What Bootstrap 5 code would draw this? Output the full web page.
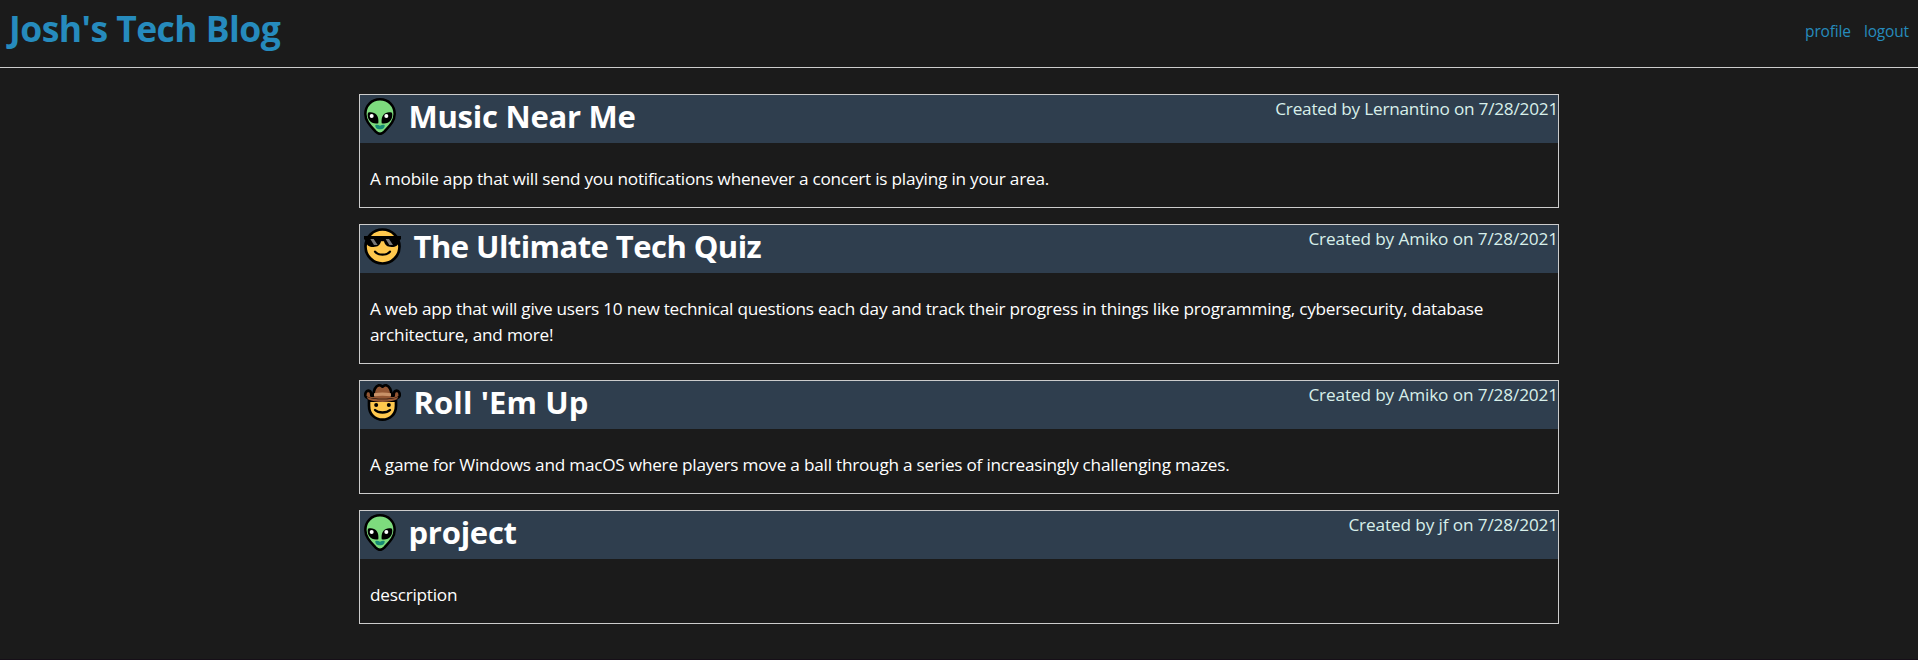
<!DOCTYPE html>
<html lang="en">
<head>
<meta charset="utf-8">
<meta name="viewport" content="width=device-width, initial-scale=1">
<title>Josh's Tech Blog</title>
<link rel="stylesheet" href="https://cdn.jsdelivr.net/npm/bootstrap@5.3.0/dist/css/bootstrap.min.css">
<style>
  body { background: #1b1b1b; color: #fff; font-family: "Segoe UI", "Open Sans", sans-serif; border-bottom: 1px solid #160f18; }
  a { color: #268bbd; }
  .site-header { height: 68px; border-bottom: 1px solid #ccc; }
  .site-title { font-size: 35.5px; font-weight: 700; line-height: 56px; letter-spacing: -.55px; padding-left: 1px; }
  .site-nav { font-size: 15.5px; line-height: 24px; letter-spacing: -.15px; gap: 13px; padding: 19px 1px 0 0; }
  .site-main { width: 1200px; padding-top: 26px; }
  .project { border: 1px solid #ccc; }
  .project-head { height: 48px; background: #2f3e4e; }
  .project-name { font-size: 31px; font-weight: 700; line-height: 42px; letter-spacing: var(--track, -.25px); }
  .project-icon { width: 37px; height: 37px; margin: 3px 12.5px 0 4px; flex: none; }
  .project-icon.alien { width: 32px; height: 37px; }
  .project-meta { font-size: 17.2px; line-height: 28px; color: #d8efea; letter-spacing: -.12px; }
  .project-text { font-size: 17.2px; line-height: 26px; letter-spacing: -.23px; padding: 23px 8px 15px 10px; }
  .track-tight { --track: -.55px; }
  .track-wide { --track: .1px; }
  .meta-tight { letter-spacing: -.22px; }
</style>
</head>
<body class="min-vh-100">
<svg class="d-none" xmlns="http://www.w3.org/2000/svg">
  <symbol id="alien" viewBox="0 0 96 111">
    <path d="M48 4C22 4 4 23 4 48c0 22 17 37 31 53 8 8 18 8 26 0 14-16 31-31 31-53C92 23 74 4 48 4Z" fill="#7ddb7d" stroke="#000" stroke-width="7.5"/>
    <path d="M12 44c9-3 20-1 26 7 5 7 6 15 5 25-12 2-21-1-27-9-5-7-6-16-4-23ZM84 44c-9-3-20-1-26 7-5 7-6 15-5 25 12 2 21-1 27-9 5-7 6-16 4-23Z" fill="#000"/>
    <circle cx="23" cy="54" r="6" fill="#fff"/><circle cx="67" cy="54" r="6" fill="#fff"/>
    <path d="M34 81q6-2 14 2 8-4 14-2c1 8-5 13-14 13s-15-5-14-13Z" fill="#178b74"/>
  </symbol>
  <symbol id="cool" viewBox="0 0 111 111">
    <circle cx="55.5" cy="55.5" r="51" fill="#ffc84d" stroke="#000" stroke-width="8"/>
    <path d="M0 24h111v10q-5 1-6 7c-2 10-9 16-22 16-14 0-20-5-23-17h-9c-3 12-9 17-23 17-13 0-20-6-22-16q-1-6-6-7Z" fill="#000"/>
    <path d="M19 33h10l12 18H30ZM65 33h10l12 18H76Z" fill="#777"/>
    <path d="M33 71c9 12 36 12 45 0" fill="none" stroke="#000" stroke-width="7" stroke-linecap="round"/>
  </symbol>
  <symbol id="cowboy" viewBox="0 0 111 111">
    <path d="M15 50v15c0 26 18 42 40.500 42S96 91 96 65V50Z" fill="#ffc84d" stroke="#000" stroke-width="8"/>
    <path d="M28 35c1-17 7-28 16-31 5-1 8 2 11.500 4C59 6 62 3 67 4c9 3 15 14 16 31h6c0-8 2-15 9-15 7 1 10 8 9 15-2 9-20 13-51.500 13S6 44 4 35c-1-7 2-14 9-15 7 0 9 7 9 15Z" fill="#935633" stroke="#000" stroke-width="8" stroke-linejoin="round"/>
    <path d="M8 38q18 8 47.500 8T103 38l-4 8q-18 8-43.500 8T12 46Z" fill="#935633"/>
    <path d="M30 28q25-5 51 0v9q-26-4-51 0Z" fill="#c99268"/>
    <path d="M55.500 5v7" stroke="#000" stroke-width="5"/>
    <circle cx="36.500" cy="63" r="6" fill="#000"/><circle cx="74.500" cy="63" r="6" fill="#000"/>
    <path d="M33 78c10 10 35 10 45 0" fill="none" stroke="#000" stroke-width="7" stroke-linecap="round"/>
  </symbol>
</svg>

<header class="site-header d-flex justify-content-between align-items-start px-2">
  <h1 class="site-title m-0"><a href="#" class="text-decoration-none">Josh's Tech Blog</a></h1>
  <nav class="site-nav d-flex">
    <a href="#" class="text-decoration-none">profile</a>
    <a href="#" class="text-decoration-none">logout</a>
  </nav>
</header>

<main class="site-main mx-auto d-flex flex-column gap-3">
  <article class="project">
    <div class="project-head d-flex justify-content-between">
      <div class="d-flex align-items-start"><svg class="project-icon alien"><use href="#alien"/></svg><h2 class="project-name m-0">Music Near Me</h2></div>
      <div class="project-meta meta-tight">Created by Lernantino on 7/28/2021</div>
    </div>
    <p class="project-text m-0">A mobile app that will send you notifications whenever a concert is playing in your area.</p>
  </article>
  <article class="project">
    <div class="project-head d-flex justify-content-between">
      <div class="d-flex align-items-start"><svg class="project-icon"><use href="#cool"/></svg><h2 class="project-name track-tight m-0">The Ultimate Tech Quiz</h2></div>
      <div class="project-meta">Created by Amiko on 7/28/2021</div>
    </div>
    <p class="project-text m-0">A web app that will give users 10 new technical questions each day and track their progress in things like programming, cybersecurity, database architecture, and more!</p>
  </article>
  <article class="project">
    <div class="project-head d-flex justify-content-between">
      <div class="d-flex align-items-start"><svg class="project-icon"><use href="#cowboy"/></svg><h2 class="project-name track-wide m-0">Roll 'Em Up</h2></div>
      <div class="project-meta">Created by Amiko on 7/28/2021</div>
    </div>
    <p class="project-text m-0">A game for Windows and macOS where players move a ball through a series of increasingly challenging mazes.</p>
  </article>
  <article class="project">
    <div class="project-head d-flex justify-content-between">
      <div class="d-flex align-items-start"><svg class="project-icon alien"><use href="#alien"/></svg><h2 class="project-name m-0">project</h2></div>
      <div class="project-meta">Created by jf on 7/28/2021</div>
    </div>
    <p class="project-text m-0">description</p>
  </article>
</main>
<script src="https://cdn.jsdelivr.net/npm/bootstrap@5.3.0/dist/js/bootstrap.bundle.min.js"></script>
</body>
</html>
